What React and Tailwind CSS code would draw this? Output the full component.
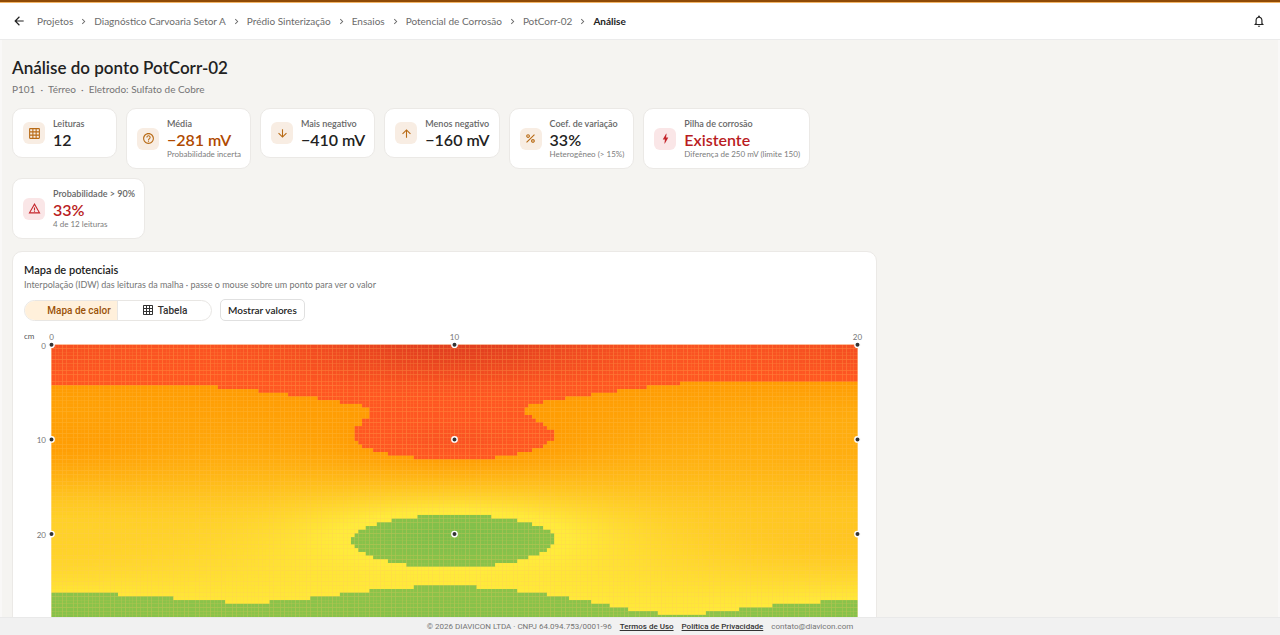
import React, { useState } from "react";
import {
  MdArrowBack,
  MdArrowDownward,
  MdArrowUpward,
  MdBolt,
  MdChevronRight,
  MdGridOn,
  MdHelpOutline,
  MdNotificationsNone,
  MdPercent,
  MdWarningAmber,
} from "react-icons/md";

const CRUMBS = [
  "Projetos",
  "Diagnóstico Carvoaria Setor A",
  "Prédio Sinterização",
  "Ensaios",
  "Potencial de Corrosão",
  "PotCorr-02",
];

const STATS = [
  { icon: MdGridOn, label: "Leituras", value: "12" },
  { icon: MdHelpOutline, label: "Média", value: "−281 mV", note: "Probabilidade incerta", tone: "warn" },
  { icon: MdArrowDownward, label: "Mais negativo", value: "−410 mV" },
  { icon: MdArrowUpward, label: "Menos negativo", value: "−160 mV" },
  { icon: MdPercent, label: "Coef. de variação", value: "33%", note: "Heterogêneo (> 15%)" },
  { icon: MdBolt, label: "Pilha de corrosão", value: "Existente", note: "Diferença de 250 mV (limite 150)", tone: "bad" },
  { icon: MdWarningAmber, label: "Probabilidade > 90%", value: "33%", note: "4 de 12 leituras", tone: "bad" },
];

const VALUE_TONE = { warn: "text-[#b04a00]", bad: "text-[#b91c22]" };

function StatCard({ icon: Icon, label, value, note, tone }) {
  return (
    <div className="flex min-w-[105px] items-center gap-2 rounded-[10px] border border-[#ebe9e6] bg-white py-2 pr-[9px] pl-[10px]">
      <span
        className={`flex size-[22px] shrink-0 items-center justify-center rounded-md ${
          tone === "bad" ? "bg-[#fae6e7] text-[#c4252b]" : "bg-[#f8ede3] text-[#b86a14]"
        }`}
      >
        <Icon size={13} />
      </span>
      <div>
        <p className="text-[9px] leading-[13px] font-semibold text-[#666]">{label}</p>
        <p className={`text-[16px] leading-[19px] font-semibold ${VALUE_TONE[tone] ?? "text-[#222]"}`}>{value}</p>
        {note && <p className="text-[8px] leading-[11px] text-[#7c7c7c]">{note}</p>}
      </div>
    </div>
  );
}

/* Readings in mV on a mesh with a 10 cm step */
const READINGS = [
  [-365, -410, -370],
  [-340, -360, -312],
  [-245, -160, -268],
  [-180, -175, -178],
];

const COLS = 218;
const ROWS = 77;
const PLOT = { x: 27.5, y: 14.7, w: 806, h: 285 };
const CW = PLOT.w / COLS;
const CH = PLOT.h / ROWS;

/* Horizontal extent of the zones on each row, in plot units */
const RED_FROM = 10;
const RED = [
  [0, 627], [167, 594], [208, 564], [238, 538], [267, 515], [290, 493], [309, 478],
  [319, 475], [319, 475], [319, 482], [312, 486], [309, 493], [305, 496], [304, 501],
  [304, 501], [304, 501], [308, 496], [312, 493], [323, 482], [338, 467], [364, 445],
];
const ISLE_FROM = 46;
const ISLE = [
  [367, 441], [341, 467], [327, 482], [315, 493], [308, 500], [304, 504], [300, 504],
  [300, 504], [304, 500], [308, 497], [315, 489], [323, 478], [338, 467], [356, 445],
];
/* [end of step, first green row] */
const SHORE = [
  [67, 67], [122, 68], [174, 69], [219, 70], [260, 69], [290, 68], [319, 67], [364, 66],
  [426, 65], [467, 66], [497, 67], [519, 68], [541, 69], [560, 70], [578, 71], [605, 72],
  [653, 73], [686, 72], [720, 71], [768, 70], [806, 69],
];

function zoneAt(col, row) {
  const x = (col + 0.5) * CW;
  const red = RED[row - RED_FROM];
  if (row < RED_FROM || (red && x > red[0] && x < red[1])) return "red";
  const isle = ISLE[row - ISLE_FROM];
  if (isle && x > isle[0] && x < isle[1]) return "green";
  return row >= SHORE.find(([end]) => x <= end)[1] ? "green" : "amber";
}

function idw(x, y) {
  let sum = 0;
  let weight = 0;
  READINGS.forEach((line, j) =>
    line.forEach((v, i) => {
      const d2 = (x - i * 10) ** 2 + (y - j * 10) ** 2;
      const w = 1 / (d2 + 0.001);
      sum += w * v;
      weight += w;
    })
  );
  return sum / weight;
}

const RAMPS = {
  red: { from: -350, to: -500, a: [255, 87, 34], b: [183, 28, 28] },
  amber: { from: -350, to: -200, a: [255, 152, 0], b: [255, 235, 59] },
  green: { from: -200, to: 0, a: [139, 195, 74], b: [76, 175, 80] },
};

function colorOf(zone, v) {
  const { from, to, a, b } = RAMPS[zone];
  const t = Math.min(1, Math.max(0, (v - from) / (to - from)));
  return `rgb(${a.map((c, i) => Math.round(c + (b[i] - c) * t)).join(",")})`;
}

const CELLS = [];
for (let r = 0; r < ROWS; r++) {
  for (let c = 0; c < COLS; c++) {
    const v = idw(((c + 0.5) / COLS) * 20, ((r + 0.5) / ROWS) * 30);
    CELLS.push(
      <rect
        key={r * COLS + c}
        x={(PLOT.x + c * CW).toFixed(2)}
        y={(PLOT.y + r * CH).toFixed(2)}
        width={CW.toFixed(2)}
        height={CH.toFixed(2)}
        fill={colorOf(zoneAt(c, r), v)}
      />
    );
  }
}

function HeatMap({ showValues }) {
  return (
    <svg viewBox="0 0 841 312" className="mt-[9px] block w-full" role="img" aria-label="Mapa de calor dos potenciais">
      <g fill="#757575" fontSize="8">
        <text x="0" y="9" fill="#555">cm</text>
        {[0, 10, 20].map((cm, i) => (
          <text key={cm} x={PLOT.x + i * 403} y="10" textAnchor="middle">{cm}</text>
        ))}
        {[0, 10, 20].map((cm, j) => (
          <text key={cm} x="22" y={PLOT.y + j * 94.7 + 4} textAnchor="end">{cm}</text>
        ))}
      </g>
      <rect x={PLOT.x} y={PLOT.y} width={PLOT.w} height={PLOT.h} fill="#ffc766" />
      {CELLS}
      {READINGS.flatMap((line, j) =>
        line.map((v, i) => (
          <g key={`${i}-${j}`}>
            <circle cx={PLOT.x + i * 403} cy={PLOT.y + j * 94.7} r="2.7" fill="#333" stroke="#fff" strokeWidth="1.4" />
            {showValues && (
              <text x={PLOT.x + i * 403} y={PLOT.y + j * 94.7 + 12} fontSize="8" textAnchor="middle" fill="#222">{v}</text>
            )}
          </g>
        ))
      )}
    </svg>
  );
}

function ReadingsTable() {
  return (
    <table className="mt-3 w-full text-left text-[10px]">
      <thead>
        <tr>
          <th>cm</th>
          <th>0</th>
          <th>10</th>
          <th>20</th>
        </tr>
      </thead>
      <tbody>
        {READINGS.map((line, j) => (
          <tr key={j}>
            <th>{j * 10}</th>
            {line.map((v, i) => (
              <td key={i}>{v} mV</td>
            ))}
          </tr>
        ))}
      </tbody>
    </table>
  );
}

export default function App() {
  const [view, setView] = useState("map");
  const [showValues, setShowValues] = useState(false);

  return (
    <div className="flex h-screen flex-col bg-[#f5f4f1] font-['Lato',sans-serif] text-[#222]">
      <div className="h-[3px] shrink-0 border-b border-[#f3b566] bg-[#8f4a06]" />
      <header className="flex h-[37px] shrink-0 items-center justify-between border-b border-[#ebebeb] bg-white px-3">
        <nav aria-label="Trilha" className="flex items-center gap-[11px]">
          <button type="button" aria-label="Voltar" className="text-[#222]">
            <MdArrowBack size={14} />
          </button>
          <ol className="flex items-center gap-[5px] text-[10px] text-[#6b6b6b]">
            {CRUMBS.map((name) => (
              <li key={name} className="flex items-center gap-[5px]">
                <a href="#">{name}</a>
                <MdChevronRight size={11} />
              </li>
            ))}
            <li aria-current="page" className="font-bold text-[#222]">Análise</li>
          </ol>
        </nav>
        <button type="button" aria-label="Notificações" className="mr-[2px] text-[#222]">
          <MdNotificationsNone size={14} />
        </button>
      </header>

      <main className="min-h-0 flex-1 overflow-y-auto border-x-2 border-[#f9f8f7] px-[10px] pt-[17px] [scrollbar-width:none]">
        <div className="max-w-[865px]">
          <h1 className="text-[17px] leading-[22px] font-semibold">Análise do ponto PotCorr-02</h1>
          <p className="mt-[3px] text-[10px] leading-[14px] text-[#757575]">P101 &nbsp;·&nbsp; Térreo &nbsp;·&nbsp; Eletrodo: Sulfato de Cobre</p>

          <section className="mt-3 flex flex-wrap items-start gap-[9px]">
            {STATS.map((stat) => (
              <StatCard key={stat.label} {...stat} />
            ))}
          </section>

          <section className="mt-3 rounded-[10px] border border-[#ebe9e6] bg-white p-[11px]">
            <h2 className="text-[11px] leading-[14px] font-semibold">Mapa de potenciais</h2>
            <p className="mt-[2px] text-[9px] leading-[12px] text-[#757575]">
              Interpolação (IDW) das leituras da malha · passe o mouse sobre um ponto para ver o valor
            </p>
            <div className="mt-2 flex items-center gap-2">
              <div className="flex h-[21px] w-[188px] overflow-hidden rounded-full border border-[#e8e6e3] font-['Roboto',sans-serif] text-[10px] font-medium">
                <button
                  type="button"
                  aria-pressed={view === "map"}
                  onClick={() => setView("map")}
                  className="w-1/2 border-r border-[#e8e6e3] bg-[#fff0db] pl-4 text-[#9a5207]"
                >
                  Mapa de calor
                </button>
                <button
                  type="button"
                  aria-pressed={view === "table"}
                  onClick={() => setView("table")}
                  className="flex w-1/2 items-center justify-center gap-1 text-[#333]"
                >
                  <MdGridOn size={12} />
                  Tabela
                </button>
              </div>
              <button
                type="button"
                onClick={() => setShowValues(!showValues)}
                className="h-[22px] rounded-[5px] border border-[#e0e0e0] px-[7px] text-[10px] font-semibold"
              >
                Mostrar valores
              </button>
            </div>
            {view === "map" ? <HeatMap showValues={showValues} /> : <ReadingsTable />}
          </section>
        </div>
      </main>

      <footer className="flex h-[18px] shrink-0 items-center justify-center gap-2 border-t border-[#e9e9e9] bg-[#f1f1f1] font-['Roboto',sans-serif] text-[8px] text-[#757575]">
        <span>© 2026 DIAVICON LTDA · CNPJ 64.094.753/0001-96</span>
        <a href="#" className="font-medium text-[#333] underline">Termos de Uso</a>
        <a href="#" className="font-medium text-[#333] underline">Política de Privacidade</a>
        <a href="mailto:contato@diavicon.com">contato@diavicon.com</a>
      </footer>
    </div>
  );
}
